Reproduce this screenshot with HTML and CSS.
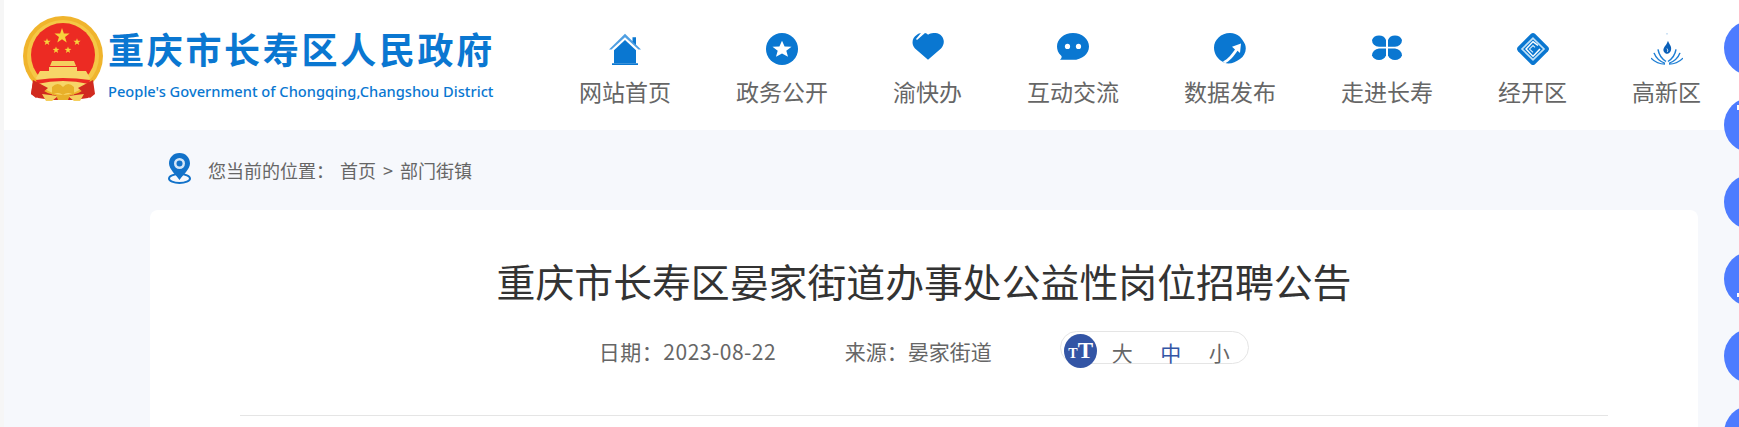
FILE: index.html
```html
<!DOCTYPE html>
<html lang="zh-CN">
<head>
    <meta charset="UTF-8">
    <meta name="viewport" content="width=device-width, initial-scale=1.0">
    <title>重庆市长寿区晏家街道办事处公益性岗位招聘公告</title>
    <link rel="stylesheet" href="styles.css">
</head>
<body>
    <div class="page">
        <header class="site-header">
            <div class="logo">
                <svg class="emblem" viewBox="0 0 82 86" width="82" height="86">
                    <defs>
                        <polygon id="star" points="0,-1 0.235,-0.324 0.951,-0.309 0.38,0.124 0.588,0.809 0,0.4 -0.588,0.809 -0.38,0.124 -0.951,-0.309 -0.235,-0.324" fill="#f7d23c"/>
                    </defs>
                    <path d="M12 60 L9 78 L16 82 L30 84 L52 84 L66 82 L72 78 L69 60 L41 74 Z" fill="#d12a1f"/>
                    <circle cx="41" cy="40" r="40" fill="#f0b42c"/>
                    <circle cx="41" cy="40" r="36" fill="#f5c746"/>
                    <circle cx="41" cy="39" r="32" fill="#ec2b23"/>
                    <use href="#star" transform="translate(40 20) scale(8)"/>
                    <use href="#star" transform="translate(25 26) scale(3.8)"/>
                    <use href="#star" transform="translate(55 26) scale(3.8)"/>
                    <use href="#star" transform="translate(34 34) scale(3.6)"/>
                    <use href="#star" transform="translate(46 34) scale(3.6)"/>
                    <path d="M30 45 H52 L54 50 H28 Z" fill="#f5cf5e"/>
                    <path d="M27 51 H55 V55 L64 55 L68 62 A30 30 0 0 1 14 62 L18 55 L27 55 Z" fill="#f7d568"/>
                    <path d="M14 64 Q41 60 68 64 L67 68 Q41 62 15 68 Z" fill="#ec2b23"/>
                    <path d="M11 64 L26 72 L14 82 L9 78 Z M71 64 L56 72 L68 82 L73 78 Z" fill="#d12a1f"/>
                    <path d="M30 71 Q36 65 41 71 Q46 65 52 71 L52 79 Q46 75 41 79 Q36 75 30 79 Z" fill="#e8b02a"/>
                    <path d="M20 78 L36 80 L30 85 L24 85 Z M62 78 L46 80 L52 85 L58 85 Z" fill="#f5cf5e"/>
                    <path d="M34 79 H48 L46 84 H36 Z" fill="#e8b02a"/>
                </svg>
                <div class="logo-text">
                    <div class="logo-cn">重庆市长寿区人民政府</div>
                    <div class="logo-en">People's Government of Chongqing,Changshou District</div>
                </div>
            </div>
            <nav class="main-nav">
                <a class="nav-item">
                    <svg class="nav-icon" viewBox="0 0 32 37" preserveAspectRatio="none">
                        <path d="M0 19 L16 1 L32 19 L29.500 19 L16 5 L2.500 19 Z" fill="#4f9fe2"/>
                        <path d="M23.500 5 H27 V14 L23.500 10 Z" fill="#0a77d1"/>
                        <path d="M16 8 L27 20 V35 H5 V20 Z" fill="#0a77d1"/>
                        <path d="M3 35 H29 V37 H3 Z" fill="#0a77d1"/>
                    </svg>
                    <span>网站首页</span>
                </a>
                <a class="nav-item">
                    <svg class="nav-icon" viewBox="0 0 32 37" preserveAspectRatio="none">
                        <ellipse cx="16" cy="18.5" rx="16" ry="18.5" fill="#0a77d1"/>
                        <polygon points="16,9 18.6,15.500 25.500,16 20.300,20.600 22,27.500 16,23.800 10,27.500 11.700,20.600 6.500,16 13.400,15.500" fill="#fff"/>
                    </svg>
                    <span>政务公开</span>
                </a>
                <a class="nav-item">
                    <svg class="nav-icon" viewBox="0 0 32 37" preserveAspectRatio="none">
                        <path d="M16 31 L3 18 C-1 13 0 5 5 2 C6 1 8 0 9 0 L4 7 L5 8 L13 0 C14 0 15 1 16 2 C20 -1 27 -1 30 4 C33 9 32 14 29 18 Z" fill="#0a77d1"/>
                    </svg>
                    <span>渝快办</span>
                </a>
                <a class="nav-item">
                    <svg class="nav-icon" viewBox="0 0 32 37" preserveAspectRatio="none">
                        <path d="M16 0 C25 0 32 7 32 15.5 C32 24 25 31 16 31 H3 C5 29 5 27 4 26 C1 23 0 19 0 15.5 C0 7 7 0 16 0 Z" fill="#0a77d1"/>
                        <ellipse cx="10.5" cy="15.5" rx="2.600" ry="3" fill="#fff"/>
                        <ellipse cx="21.5" cy="15.5" rx="2.600" ry="3" fill="#fff"/>
                    </svg>
                    <span>互动交流</span>
                </a>
                <a class="nav-item">
                    <svg class="nav-icon" viewBox="0 0 32 37" preserveAspectRatio="none">
                        <path d="M16 0 C24 0 28 6 31 13 C33 19 31 26 26 30 C21 34 15 37 10 34 C4 31 0 24 0 17 C0 8 7 0 16 0 Z" fill="#0a77d1"/>
                        <path d="M9 33 C14 30 18 24 21 19 L18 16 L27 12 L26 23 L23.500 20.500 C20 27 15 33 11 35 Z" fill="#fff"/>
                    </svg>
                    <span>数据发布</span>
                </a>
                <a class="nav-item">
                    <svg class="nav-icon" viewBox="0 0 32 37" preserveAspectRatio="none">
                        <path d="M1 8 A7.500 8 0 0 1 15 8 V16 H8 A7.500 8 0 0 1 1 8 Z" fill="#0a77d1"/>
                        <path d="M31 8 A7.500 8 0 0 0 17 8 V16 H24 A7.500 8 0 0 0 31 8 Z" fill="#0a77d1"/>
                        <path d="M1 26 A7.500 8 0 0 1 8 18 H15 V26 A7.500 8 0 0 1 1 26 Z" fill="#0a77d1"/>
                        <path d="M31 26 A7.500 8 0 0 0 24 18 H17 V26 A7.500 8 0 0 0 31 26 Z" fill="#0a77d1"/>
                    </svg>
                    <span>走进长寿</span>
                </a>
                <a class="nav-item">
                    <svg class="nav-icon" viewBox="0 0 32 37" preserveAspectRatio="none">
                        <path d="M14 1 Q16 -1 18 1 L31 16 Q33 18.500 31 21 L18 36 Q16 38 14 36 L1 21 Q-1 18.500 1 16 Z" fill="#0a77d1"/>
                        <path d="M16 6 L27 18.500 L16 31 L5 18.500 Z" fill="none" stroke="#bfe0f7" stroke-width="1.800"/>
                        <path d="M21 14.500 L16 10 L9 18.500 L16 27 L23 18.500" fill="none" stroke="#fff" stroke-width="1.500"/>
                        <path d="M18 16.500 L16 14.500 L12.500 18.500 L16 22.500" fill="none" stroke="#d6ebfa" stroke-width="1.200"/>
                    </svg>
                    <span>经开区</span>
                </a>
                <a class="nav-item">
                    <svg class="nav-icon" viewBox="0 0 32 37" preserveAspectRatio="none">
                        <path d="M17 9 C18 13 21 15 20 20 C19 24 16 25 14 23 C11 20 13 17 14 15 C15 14 16 12 17 9 Z" fill="#0a5fb8"/>
                        <path d="M16 18 C17 20 17 21 16 22" fill="none" stroke="#fff" stroke-width="1"/>
                        <path d="M7 19 C8 26 11 30 15 33 M25 19 C24 26 21 30 17 33 M3 23 C5 29 9 33 14 35 M29 23 C27 29 23 33 18 35 M0 29 C4 34 9 36 14 36 M32 29 C28 34 23 36 18 36" fill="none" stroke="#1f7fd4" stroke-width="1.500"/>
                        <circle cx="16" cy="1" r="0.700" fill="#7fb5e4"/>
                    </svg>
                    <span>高新区</span>
                </a>
            </nav>
        </header>

        <div class="breadcrumb">
            <svg class="pin" viewBox="0 0 23 31" width="23" height="31">
                <ellipse cx="11.500" cy="25.500" rx="10.500" ry="4.500" fill="none" stroke="#1272c9" stroke-width="2"/>
                <path d="M11.500 0 C18 0 22 5 22 10.500 C22 16 15 22 11.500 27 C8 22 1 16 1 10.500 C1 5 5 0 11.500 0 Z" fill="#1272c9"/>
                <circle cx="11.500" cy="10.500" r="5.500" fill="#d4e6f7"/>
                <circle cx="11.500" cy="10.500" r="3" fill="#1272c9"/>
            </svg>
            <span class="crumb-label">您当前的位置：</span>
            <a>首页</a>
            <span class="crumb-sep">&gt;</span>
            <a>部门街镇</a>
        </div>

        <main class="article-card">
            <h1 class="article-title">重庆市长寿区晏家街道办事处公益性岗位招聘公告</h1>
            <div class="article-meta">
                <span class="meta-date">日期：2023-08-22</span>
                <span>来源：晏家街道</span>
                <div class="font-size">
                    <span class="font-icon"><small>T</small>T</span>
                    <a>大</a>
                    <a class="active">中</a>
                    <a>小</a>
                </div>
            </div>
            <div class="article-line"></div>
        </main>
    </div>

    <!-- floating buttons on the right edge, mostly cut off by the window -->
    <div class="side-rail">
        <div class="side-btn"></div>
        <div class="side-btn"><i class="tick tick-top"></i></div>
        <div class="side-btn"></div>
        <div class="side-btn"><i class="tick tick-low"></i></div>
        <div class="side-btn"></div>
        <div class="side-btn"></div>
    </div>
</body>
</html>
```

FILE: styles.css
```css
html, body {
    margin: 0;
    height: 427px;
    overflow: hidden;
}
body {
    font-family: "Noto Sans CJK SC", "Liberation Sans", sans-serif;
    background: #f6f8fc;
    color: #666;
}
.page {
    border-left: 4px solid #f6f6f6;
}
.site-header {
    display: flex;
    height: 130px;
    background: #fff;
    padding-left: 18px;
}
.logo {
    display: flex;
    gap: 4px;
    padding-top: 16px;
}
.emblem {
    flex: none;
}
.logo-text {
    color: #0a77d1;
    width: 385px;
}
.logo-cn {
    font-size: 36px;
    font-weight: 700;
    letter-spacing: 2.7px;
    line-height: 52px;
    margin-top: 6px;
    white-space: nowrap;
}
.logo-en {
    font-family: "Noto Sans", sans-serif;
    font-size: 14.67px;
    font-weight: 500;
    line-height: 20px;
    margin-top: 7px;
    white-space: nowrap;
}
.main-nav {
    display: flex;
    gap: 65px;
    margin-left: 86px;
    padding-top: 33px;
}
.nav-item {
    display: flex;
    flex-direction: column;
    align-items: center;
    font-size: 23px;
    line-height: 32px;
    white-space: nowrap;
}
.nav-icon {
    display: block;
    width: 32px;
    height: 32px;
    margin-bottom: 10px;
}
.breadcrumb {
    display: flex;
    align-items: center;
    height: 80px;
    padding-left: 164px;
    box-sizing: border-box;
    font-size: 18px;
}
.pin {
    margin-right: 17px;
    margin-bottom: 4px;
}
.crumb-label {
    margin-right: 6px;
}
.crumb-sep {
    margin: 0 7px;
}
.article-card {
    width: 1548px;
    margin-left: 146px;
    min-height: 400px;
    background: #fff;
    border-radius: 8px;
    padding: 40px 90px 0;
    box-sizing: border-box;
}
.article-title {
    margin: 0;
    font-size: 38.87px;
    font-weight: 400;
    line-height: 60px;
    color: #333;
    text-align: center;
    white-space: nowrap;
}
.article-meta {
    display: flex;
    justify-content: center;
    align-items: flex-start;
    gap: 68.5px;
    height: 32px;
    margin-top: 21px;
    font-size: 21px;
    line-height: 40px;
}
.meta-date {
    letter-spacing: 0.5px;
}
.font-size {
    display: flex;
    gap: 27.5px;
    width: 189px;
    height: 33px;
    box-sizing: border-box;
    border: 1px solid #e5e5e5;
    border-radius: 17px;
    padding-left: 3px;
}
.font-icon {
    flex: none;
    width: 33px;
    height: 34px;
    margin: 2px -13px 0 0;
    border-radius: 50%;
    background: #3355a5;
    color: #fff;
    font-family: "Liberation Serif", serif;
    font-size: 23px;
    font-weight: 700;
    line-height: 34px;
    text-align: center;
}
.font-icon small {
    font-size: 14px;
}
.font-size .active {
    color: #3355a5;
}
.article-line {
    height: 1px;
    margin-top: 52px;
    background: #e5e5e5;
}
.side-rail {
    position: fixed;
    top: 20px;
    left: 1724px;
    display: flex;
    flex-direction: column;
    gap: 21px;
}
.side-btn {
    position: relative;
    width: 56px;
    height: 56px;
    border-radius: 50%;
    background: #4d7cff;
}
.tick {
    position: absolute;
    left: 13px;
    width: 2px;
    background: #fff;
}
.tick-top {
    top: 8px;
    height: 5px;
}
.tick-low {
    top: 42px;
    height: 4px;
}
```
